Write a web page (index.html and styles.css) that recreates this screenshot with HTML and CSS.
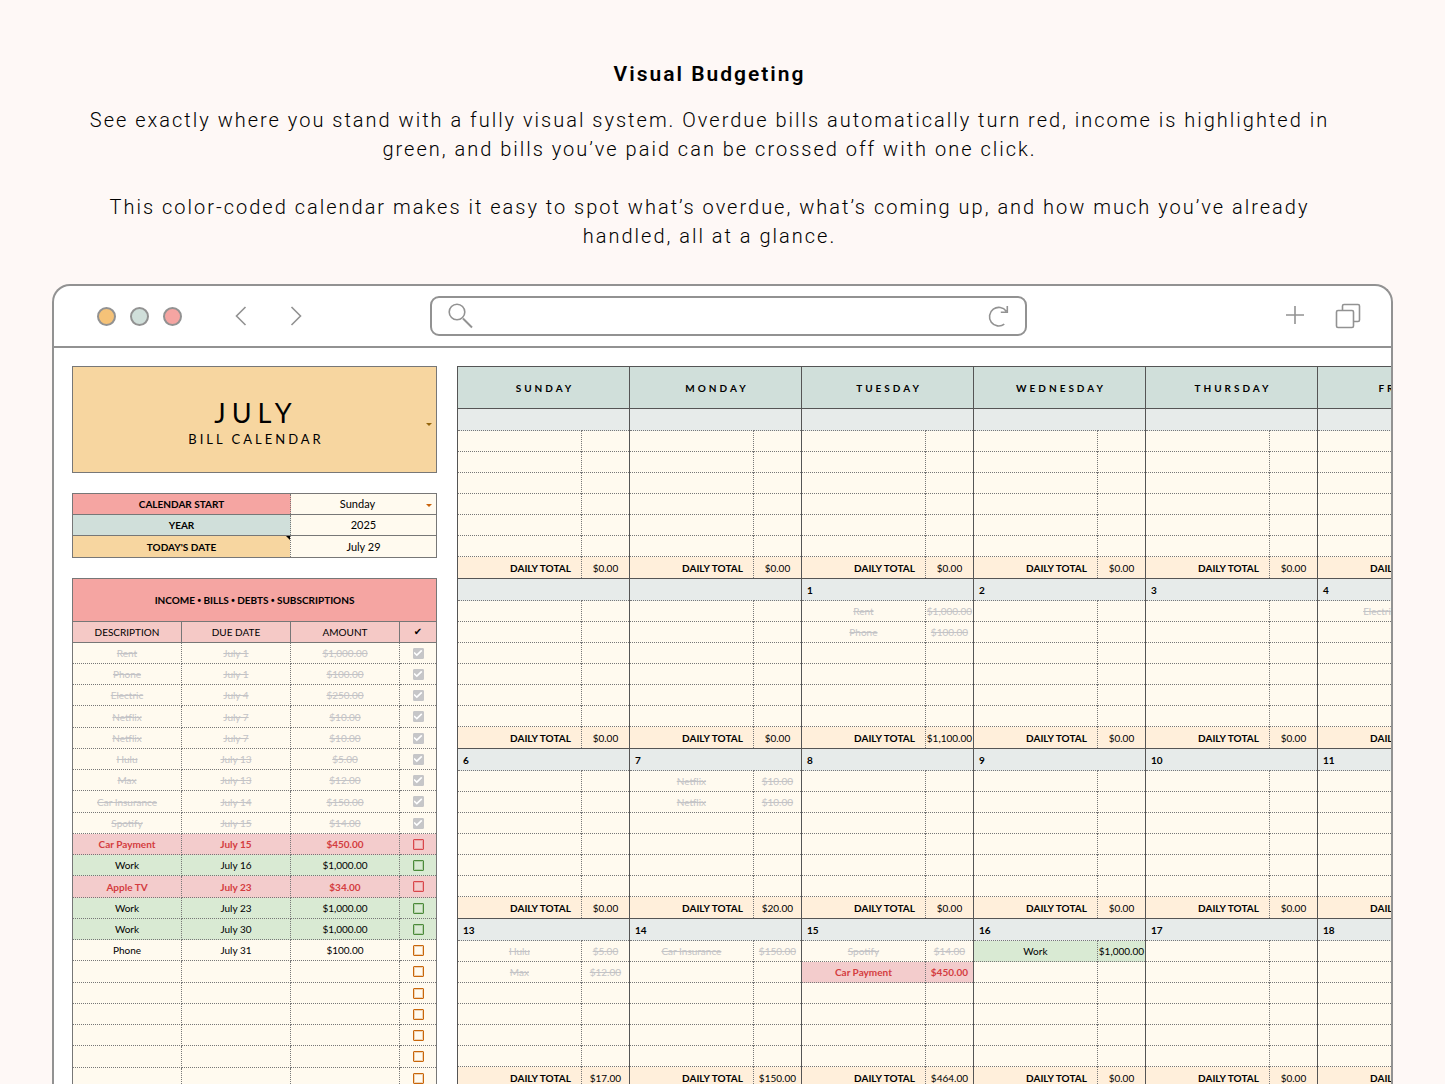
FILE: index.html
```html
<!DOCTYPE html>
<html lang="en">
<head>
<meta charset="utf-8">
<meta name="viewport" content="width=device-width, initial-scale=1">
<title>Visual Budgeting</title>
<link rel="stylesheet" href="styles.css">
</head>
<body>
<header class="intro">
  <h1 class="intro-title">Visual Budgeting</h1>
  <p class="intro-text">See exactly where you stand with a fully visual system. Overdue bills automatically turn red, income is highlighted in<br>green, and bills you’ve paid can be crossed off with one click.</p>
  <p class="intro-text">This color-coded calendar makes it easy to spot what’s overdue, what’s coming up, and how much you’ve already<br>handled, all at a glance.</p>
</header>

<main class="window">
  <div class="toolbar">
    <div class="toolbar-left">
      <div class="dots">
        <span class="dot dot-orange"></span>
        <span class="dot dot-green"></span>
        <span class="dot dot-pink"></span>
      </div>
      <div class="history">
        <button class="icon-button" type="button" aria-label="Back">
          <svg width="12" height="20" viewBox="0 0 12 20"><path d="M10.5 1 1.5 10l9 9"/></svg>
        </button>
        <button class="icon-button" type="button" aria-label="Forward">
          <svg width="12" height="20" viewBox="0 0 12 20"><path d="M1.500 1l9 9-9 9"/></svg>
        </button>
      </div>
    </div>
    <div class="search">
      <svg width="26" height="26" viewBox="0 0 26 26"><circle cx="9" cy="9" r="7.800"/><path d="M15 15.500l9 9" stroke-width="2"/></svg>
      <input class="search-input" type="text" aria-label="Address">
      <button class="icon-button" type="button" aria-label="Reload">
        <svg width="22" height="24" viewBox="0 0 22 24"><path d="M17.300 20.200A9.300 9.300 0 1 1 19.300 7.200M20.300 2v6.200h-6.500"/></svg>
      </button>
    </div>
    <div class="toolbar-right">
      <button class="icon-button" type="button" aria-label="New tab">
        <svg width="20" height="24" viewBox="0 0 20 24"><path d="M10 2v18M1 11h18"/></svg>
      </button>
      <button class="icon-button" type="button" aria-label="Show tabs">
        <svg width="26" height="26" viewBox="0 0 26 26"><rect x="7.500" y="1.500" width="17" height="17" rx="1.500"/><rect x="1.500" y="7.500" width="17" height="17" rx="1.500" fill="#fff"/></svg>
      </button>
    </div>
  </div>

  <div class="sheet">
    <aside class="sidebar">
      <section class="month-card">
        <select class="month-select" aria-label="Month"><option>JULY</option></select>
        <p class="month-label">BILL CALENDAR</p>
      </section>

      <table class="grid settings">
        <tr>
          <th class="pink" scope="row"><label for="start">CALENDAR START</label></th>
          <td class="dropdown"><select class="start-select" id="start"><option>Sunday</option></select></td>
        </tr>
        <tr><th class="mint" scope="row">YEAR</th><td>2025</td></tr>
        <tr><th class="amber noted" scope="row">TODAY'S DATE</th><td>July 29</td></tr>
      </table>

      <table class="grid bills">
        <colgroup><col class="col-text"><col class="col-text"><col class="col-text"><col></colgroup>
        <thead>
          <tr class="bills-title"><th colspan="4">INCOME <span class="bullet">•</span> BILLS <span class="bullet">•</span> DEBTS <span class="bullet">•</span> SUBSCRIPTIONS</th></tr>
          <tr class="bills-head"><th>DESCRIPTION</th><th>DUE DATE</th><th>AMOUNT</th><th class="tick">✔</th></tr>
        </thead>
        <tbody id="bills"></tbody>
      </table>
    </aside>

    <div class="calendar-pane">
      <table class="grid calendar" id="calendar"></table>
    </div>
  </div>
</main>
<script src="app.js"></script>
</body>
</html>
```

FILE: styles.css
```css
* {
  box-sizing: border-box;
}

body {
  display: flex;
  flex-direction: column;
  height: 100vh;
  margin: 0;
  overflow: hidden;
  background: #fef8f6;
  color: #000;
  font-family: Lato, sans-serif;
  font-size: 10px;
}

h1,
p {
  margin: 0;
}

button,
input,
select {
  margin: 0;
  padding: 0;
  border: 0;
  background: none;
  color: inherit;
  font: inherit;
}

/* Introduction */

.intro {
  display: flex;
  flex-direction: column;
  flex: none;
  gap: 29px;
  padding: 60px 78px 33px 52px;
  font-family: Roboto, sans-serif;
  font-size: 20px;
  font-weight: 300;
  line-height: 29px;
  letter-spacing: 2px;
  text-align: center;
}

.intro-title {
  margin-bottom: -12px;
  font-size: 21px;
  font-weight: 600;
}

/* Browser window */

.window {
  display: flex;
  flex: 1;
  flex-direction: column;
  min-height: 0;
  margin: 0 52px;
  overflow: hidden;
  border: 2px solid #929292;
  border-bottom: 0;
  border-radius: 18px 18px 0 0;
  background: #fff;
}

.toolbar {
  display: grid;
  flex: none;
  grid-template-columns: 376px 1fr 364px;
  align-items: center;
  height: 62px;
  border-bottom: 2px solid #929292;
}

.toolbar svg {
  display: block;
  fill: none;
  stroke: #929292;
  stroke-width: 1.6;
}

.toolbar-left,
.toolbar-right,
.dots,
.history {
  display: flex;
  align-items: center;
}

.toolbar-left {
  gap: 53px;
  padding-left: 43px;
}

.dots {
  gap: 14px;
}

.dot {
  width: 19px;
  height: 19px;
  border: 2px solid #929292;
  border-radius: 50%;
}

.dot-orange {
  background: #f5c278;
}

.dot-green {
  background: #d0dfda;
}

.dot-pink {
  background: #f5a5a2;
}

.history {
  gap: 43px;
}

.search {
  display: flex;
  align-items: center;
  height: 40px;
  padding: 0 16px;
  border: 2px solid #929292;
  border-radius: 9px;
}

.search-input {
  flex: 1;
  min-width: 0;
  height: 30px;
}

.toolbar-right {
  justify-content: flex-end;
  gap: 30px;
  padding-right: 30px;
}

/* Spreadsheet */

.sheet {
  display: flex;
  flex: 1;
  gap: 20px;
  min-height: 0;
  padding: 18px 0 0 18px;
}

.sidebar {
  display: flex;
  flex: none;
  flex-direction: column;
  gap: 20px;
  width: 365px;
}

.sidebar > * {
  flex: none;
}

.grid {
  width: 100%;
  border: 1px solid #777;
  border-collapse: collapse;
  table-layout: fixed;
  background: #fffaef;
  text-align: center;
}

.grid th,
.grid td {
  height: 21px;
  padding: 0;
  line-height: 16px;
}

.month-card {
  position: relative;
  display: flex;
  flex-direction: column;
  align-items: center;
  height: 107px;
  padding: 29px 0 0 3px;
  border: 1px solid #777;
  background: #f7d6a0;
}

.month-select {
  width: 100%;
  appearance: none;
  font-size: 27px;
  font-weight: 400;
  line-height: 34px;
  letter-spacing: 6px;
  text-align: center;
  text-align-last: center;
}

.month-label {
  font-size: 13px;
  line-height: 18px;
  letter-spacing: 3px;
}

.month-card::after,
.dropdown::after {
  position: absolute;
  top: 50%;
  right: 4px;
  border: 3px solid transparent;
  border-top-color: #c9620a;
  border-bottom: 0;
  content: "";
}

.month-card::after {
  top: 53%;
  border-top-color: #94650c;
}

.settings td {
  border-left: 1px dotted #777;
  font-size: 11px;
}

.settings th {
  width: 218px;
}

.settings tr {
  border-top: 1px solid #777;
}

.settings tr:last-child td {
  height: 22px;
}

.dropdown,
.noted {
  position: relative;
}

.start-select {
  display: block;
  width: 100%;
  padding-right: 12px;
  appearance: none;
  text-align: center;
  text-align-last: center;
}

.noted::after {
  position: absolute;
  top: 0;
  right: 0;
  border: 2px solid #000;
  border-bottom-color: transparent;
  border-left-color: transparent;
  content: "";
}

.pink,
.bills-title {
  background: #f5a5a2;
}

.mint {
  background: #d0dfda;
}

.amber {
  background: #f7d6a0;
}

.col-text {
  width: 109px;
}

.grid .bills-title th {
  height: 43px;
}

.bullet {
  font-family: "Liberation Sans", sans-serif;
}

.bills-head th {
  border: 1px solid #777;
  background: #f5c9c6;
  font-weight: 400;
}

.bills-head .tick {
  font-family: "DejaVu Sans", sans-serif;
}

.bills td {
  border: 1px dotted #777;
}

.bills tbody tr:nth-child(4n) td {
  height: 22px;
}

.paid {
  color: #c3c3c6;
  text-decoration: line-through;
}

.late {
  background: #f3cccc;
  color: #d43c40;
  font-weight: 700;
}

.income {
  background: #d9ead3;
}

.check {
  display: grid;
  place-items: center;
  width: 11px;
  height: 11px;
  margin: 0 auto;
  appearance: none;
  border: 1px solid #c8660a;
  border-radius: 1px;
  outline: 1px solid #c8660a44;
  outline-offset: -2px;
}

.late .check {
  border-color: #d9474b;
  outline-color: #d9474b44;
}

.income .check {
  border-color: #4c8b3a;
  outline-color: #4c8b3a44;
}

.check:checked {
  border-color: #c6c6c8;
  background: #c6c6c8;
  outline: 0;
}

.check:checked::before {
  width: 9px;
  height: 7px;
  background: #fff;
  clip-path: polygon(0 50%, 12% 34%, 36% 64%, 86% 4%, 98% 20%, 37% 96%);
  content: "";
}

/* Calendar */

.calendar-pane {
  flex: 1;
  min-width: 0;
  overflow: hidden;
}

.calendar {
  width: 1033px;
}

.col-item {
  width: 12%;
}

.calendar .weekday {
  height: 42px;
  padding-left: 3px;
  border: 1px solid #555;
  background: #d0dfda;
  letter-spacing: 3px;
}

.calendar .date {
  height: 22px;
  padding-left: 5px;
  border: 1px solid #555;
  border-bottom: 1px dotted #777;
  background: #e7ebea;
  text-align: left;
}

.calendar td,
.calendar .total-label {
  border-top: 1px dotted #777;
}

.item,
.total-label {
  border-right: 1px dotted #777;
  border-left: 1px solid #555;
}

.calendar .total-label,
.calendar .total {
  height: 22px;
  background: #ffefdb;
}

.calendar .total-label {
  padding-right: 10px;
  text-align: right;
}
```

FILE: app.js
```js
const bills = [
  ["Rent", "July 1", "$1,000.00", "paid"],
  ["Phone", "July 1", "$100.00", "paid"],
  ["Electric", "July 4", "$250.00", "paid"],
  ["Netflix", "July 7", "$10.00", "paid"],
  ["Netflix", "July 7", "$10.00", "paid"],
  ["Hulu", "July 13", "$5.00", "paid"],
  ["Max", "July 13", "$12.00", "paid"],
  ["Car Insurance", "July 14", "$150.00", "paid"],
  ["Spotify", "July 15", "$14.00", "paid"],
  ["Car Payment", "July 15", "$450.00", "late"],
  ["Work", "July 16", "$1,000.00", "income"],
  ["Apple TV", "July 23", "$34.00", "late"],
  ["Work", "July 23", "$1,000.00", "income"],
  ["Work", "July 30", "$1,000.00", "income"],
  ["Phone", "July 31", "$100.00", ""],
];
const blankBills = 6;

const weekdays = ["SUNDAY", "MONDAY", "TUESDAY", "WEDNESDAY", "THURSDAY", "FRIDAY"];
const linesPerDay = 6;

const weeks = [
  { dates: ["", "", "", "", "", ""], totals: ["$0.00", "$0.00", "$0.00", "$0.00", "$0.00", ""], items: {} },
  {
    dates: ["", "", "1", "2", "3", "4"],
    totals: ["$0.00", "$0.00", "$1,100.00", "$0.00", "$0.00", ""],
    items: {
      2: [["Rent", "$1,000.00", "paid"], ["Phone", "$100.00", "paid"]],
      5: [["Electric", "", "paid"]],
    },
  },
  {
    dates: ["6", "7", "8", "9", "10", "11"],
    totals: ["$0.00", "$20.00", "$0.00", "$0.00", "$0.00", ""],
    items: { 1: [["Netflix", "$10.00", "paid"], ["Netflix", "$10.00", "paid"]] },
  },
  {
    dates: ["13", "14", "15", "16", "17", "18"],
    totals: ["$17.00", "$150.00", "$464.00", "$0.00", "$0.00", ""],
    items: {
      0: [["Hulu", "$5.00", "paid"], ["Max", "$12.00", "paid"]],
      1: [["Car Insurance", "$150.00", "paid"]],
      2: [["Spotify", "$14.00", "paid"], ["Car Payment", "$450.00", "late"]],
      3: [["Work", "$1,000.00", "income"]],
    },
  },
];

const billRow = ([name, due, amount, state]) => `
  <tr class="${state}">
    <td>${name}</td><td>${due}</td><td>${amount}</td>
    <td><input class="check" type="checkbox" aria-label="${name || "Bill"} paid"${state === "paid" ? " checked" : ""}></td>
  </tr>`;

const blanks = Array.from({ length: blankBills }, () => ["", "", "", ""]);
document.getElementById("bills").innerHTML = [...bills, ...blanks].map(billRow).join("");

const row = (cells) => `<tr>${cells.join("")}</tr>`;

const weekRows = ({ dates, totals, items }) => {
  const lines = Array.from({ length: linesPerDay }, (_, line) =>
    row(dates.map((_, day) => {
      const [name, amount, state] = (items[day] || [])[line] || ["", "", ""];
      return `<td class="item ${state}">${name}</td><td class="amount ${state}">${amount}</td>`;
    }))
  );
  return [
    row(dates.map((date) => `<th class="date" colspan="2">${date}</th>`)),
    ...lines,
    row(totals.map((total) => `<th class="total-label">DAILY TOTAL</th><td class="total">${total}</td>`)),
  ].join("");
};

document.getElementById("calendar").innerHTML = `
  <colgroup>${weekdays.map(() => '<col class="col-item"><col>').join("")}</colgroup>
  <thead>${row(weekdays.map((day) => `<th class="weekday" colspan="2" scope="col">${day}</th>`))}</thead>
  <tbody>${weeks.map(weekRows).join("")}</tbody>`;
```
